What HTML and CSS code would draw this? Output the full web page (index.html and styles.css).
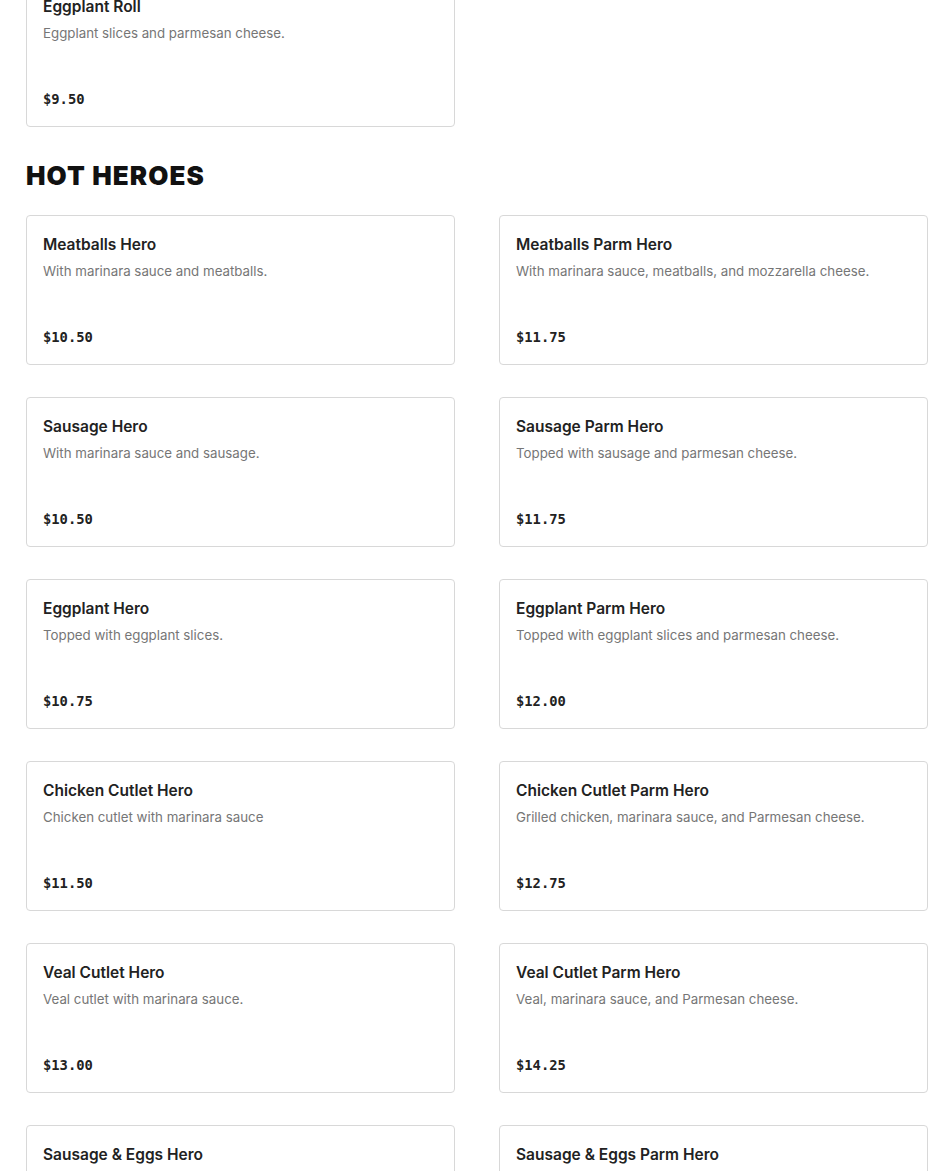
FILE: index.html
```html
<!DOCTYPE html>
<html lang="en">
<head>
<meta charset="utf-8">
<title>Menu</title>
<link rel="stylesheet" href="styles.css">
</head>
<body>
<main class="menu">
  <section class="section section-first">
    <div class="grid">
      <article class="card">
        <h3 class="card-title">Eggplant Roll</h3>
        <p class="card-desc">Eggplant slices and parmesan cheese.</p>
        <div class="card-price">$9.50</div>
      </article>
    </div>
  </section>
  <section class="section">
    <h2 class="section-title">HOT HEROES</h2>
    <div class="grid">
      <article class="card">
        <h3 class="card-title">Meatballs Hero</h3>
        <p class="card-desc">With marinara sauce and meatballs.</p>
        <div class="card-price">$10.50</div>
      </article>
      <article class="card">
        <h3 class="card-title">Meatballs Parm Hero</h3>
        <p class="card-desc">With marinara sauce, meatballs, and mozzarella cheese.</p>
        <div class="card-price">$11.75</div>
      </article>
      <article class="card">
        <h3 class="card-title">Sausage Hero</h3>
        <p class="card-desc">With marinara sauce and sausage.</p>
        <div class="card-price">$10.50</div>
      </article>
      <article class="card">
        <h3 class="card-title">Sausage Parm Hero</h3>
        <p class="card-desc">Topped with sausage and parmesan cheese.</p>
        <div class="card-price">$11.75</div>
      </article>
      <article class="card">
        <h3 class="card-title">Eggplant Hero</h3>
        <p class="card-desc">Topped with eggplant slices.</p>
        <div class="card-price">$10.75</div>
      </article>
      <article class="card">
        <h3 class="card-title">Eggplant Parm Hero</h3>
        <p class="card-desc">Topped with eggplant slices and parmesan cheese.</p>
        <div class="card-price">$12.00</div>
      </article>
      <article class="card">
        <h3 class="card-title">Chicken Cutlet Hero</h3>
        <p class="card-desc">Chicken cutlet with marinara sauce</p>
        <div class="card-price">$11.50</div>
      </article>
      <article class="card">
        <h3 class="card-title">Chicken Cutlet Parm Hero</h3>
        <p class="card-desc">Grilled chicken, marinara sauce, and Parmesan cheese.</p>
        <div class="card-price">$12.75</div>
      </article>
      <article class="card">
        <h3 class="card-title">Veal Cutlet Hero</h3>
        <p class="card-desc">Veal cutlet with marinara sauce.</p>
        <div class="card-price">$13.00</div>
      </article>
      <article class="card">
        <h3 class="card-title">Veal Cutlet Parm Hero</h3>
        <p class="card-desc">Veal, marinara sauce, and Parmesan cheese.</p>
        <div class="card-price">$14.25</div>
      </article>
      <article class="card">
        <h3 class="card-title">Sausage &amp; Eggs Hero</h3>
        <p class="card-desc">Sausage and eggs.</p>
        <div class="card-price">$11.00</div>
      </article>
      <article class="card">
        <h3 class="card-title">Sausage &amp; Eggs Parm Hero</h3>
        <p class="card-desc">Sausage, eggs, and mozzarella cheese.</p>
        <div class="card-price">$12.25</div>
      </article>
    </div>
  </section>
</main>
</body>
</html>
```

FILE: styles.css
```css
* { box-sizing: border-box; }
html, body { margin: 0; padding: 0; background: #fff; }
body {
  font-family: Inter, "Liberation Sans", Arial, sans-serif;
  color: #222;
  overflow: hidden;
}
.menu {
  width: 902px;
  margin: -23px 0 0 26px;
}
.section-first { margin-bottom: 32px; }
.section-title {
  margin: 0 0 22px;
  font-family: Inter, "Liberation Sans", sans-serif;
  font-weight: 900;
  font-size: 26px;
  line-height: 34px;
  letter-spacing: 1.1px;
  color: #111;
}
.grid {
  display: grid;
  grid-template-columns: 429px 429px;
  column-gap: 44px;
  row-gap: 32px;
}
.card {
  display: flex;
  flex-direction: column;
  height: 150px;
  padding: 17px 16px 17px 16px;
  border: 1px solid #d8d8d8;
  border-radius: 4px;
  background: #fff;
}
.card-title {
  margin: 0;
  font-size: 15.5px;
  line-height: 24px;
  font-weight: 600;
  color: #222;
}
.card-desc {
  margin: 3px 0 0;
  font-size: 13.3px;
  line-height: 22px;
  color: #767676;
}
.card-price {
  margin-top: auto;
  font-family: "DejaVu Sans Mono", "Liberation Mono", monospace;
  font-weight: 700;
  font-size: 13.8px;
  line-height: 20px;
  color: #222;
}
```
